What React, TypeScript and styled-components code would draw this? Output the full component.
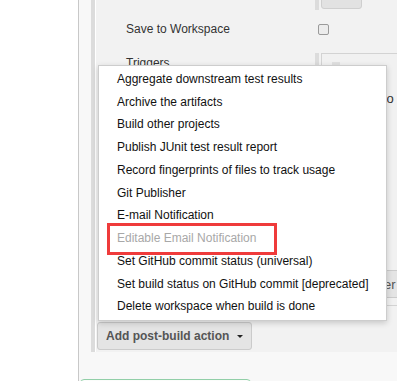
import React from 'react'
import styled, { createGlobalStyle } from 'styled-components'

const GlobalStyle = createGlobalStyle`
html, body {
  margin: 0;
  padding: 0;
  background: #fff;
  font-family: "Liberation Sans", Arial, sans-serif;
  font-size: 12px;
  overflow: hidden;
}
`

const Page = styled.div`
display: flex;
width: 397px;
height: 381px;
overflow: hidden;
`

const SideGap = styled.div`
width: 78px;
flex-shrink: 0;
background: #fff;
`

const Panel = styled.div`
flex: 1;
min-width: 0;
border-left: 1px solid #c8c8c8;
background: #f8f8f8;
`

const SectionWrap = styled.div`
padding-left: 12px;
`

const Section = styled.div`
background: #f2f2f2;
border-left: 4px solid #dcdcdc;
box-shadow: inset 1px 0 0 #fff;
padding: 0 0 2px 1px;
display: flex;
flex-direction: column;
`

const Row = styled.div<{ $pad?: string }>`
display: grid;
grid-template-columns: 219px 1fr;
padding: ${p => p.$pad || '0'};
`

const Label = styled.div`
padding-left: 30px;
color: #333;
line-height: 15px;
white-space: nowrap;
`

const Nested = styled.div`
border-left: 4px solid #dcdcdc;
padding-left: 2px;
min-width: 0;
`

const SmallButton = styled.div`
width: 41px;
height: 24px;
margin-top: -15px;
box-sizing: border-box;
background: #e2e2e2;
border: 1px solid #cfcfcf;
border-radius: 3px;
`

const Check = styled.div`
width: 11px;
height: 11px;
box-sizing: border-box;
margin-left: 3px;
border: 1px solid #9a9a9a;
border-radius: 2px;
background: #ececec;
`

const TriggerBox = styled.div`
border: 1px solid #d3d3d3;
border-right: none;
background: #f1f1f1;
padding: 8px 0 7px 0;
display: flex;
flex-direction: column;
`

const Handle = styled.div`
width: 8px;
height: 20px;
margin-left: 10px;
background: #e0e0e0;
`

const TriggerText = styled.div`
margin-top: 9px;
padding-left: 61px;
font-size: 13px;
line-height: 16px;
color: #333;
white-space: nowrap;
`

const GrayButton = styled.div<{ $bold?: boolean; $left?: number }>`
display: inline-flex;
align-items: center;
align-self: flex-start;
height: 28px;
box-sizing: border-box;
margin-left: ${p => p.$left || 0}px;
padding: 0 8px 0 8px;
background: #e4e4e4;
border: 1px solid #cbcbcb;
border-radius: 3px;
color: #555;
font-size: ${p => (p.$bold ? '12px' : '13px')};
font-weight: ${p => (p.$bold ? 'bold' : 'normal')};
white-space: nowrap;
`

const ActionArea = styled.div`
position: relative;
margin-top: 16px;
margin-left: 1px;
align-self: flex-start;
`

const Caret = styled.span`
display: inline-block;
margin-left: 8px;
width: 0;
height: 0;
border-left: 3px solid transparent;
border-right: 3px solid transparent;
border-top: 3px solid #222;
`

const Menu = styled.div`
position: absolute;
left: 1px;
bottom: calc(100% + 1px);
width: 289px;
box-sizing: border-box;
padding: 2px 0;
background: #fff;
border: 1px solid #cdcdcd;
box-shadow: 0 2px 6px rgba(0, 0, 0, 0.18);
z-index: 2;
`

const MenuItem = styled.div<{ $disabled?: boolean }>`
position: relative;
height: 22.75px;
line-height: 22.75px;
padding-left: 18px;
color: ${p => (p.$disabled ? '#a8a8a8' : '#111')};
white-space: nowrap;
`

const Highlight = styled.span`
position: absolute;
left: 8px;
top: -4.5px;
width: 170px;
height: 32px;
box-sizing: border-box;
border: 3px solid #ef3b3b;
pointer-events: none;
`

const Footer = styled.div`
margin: 27px 0 0 1px;
width: 171px;
height: 20px;
box-sizing: border-box;
border: 1px solid #92cfa8;
border-radius: 4px;
background: #fbfdfb;
`

const items = [
  'Aggregate downstream test results',
  'Archive the artifacts',
  'Build other projects',
  'Publish JUnit test result report',
  'Record fingerprints of files to track usage',
  'Git Publisher',
  'E-mail Notification',
  'Editable Email Notification',
  'Set GitHub commit status (universal)',
  'Set build status on GitHub commit [deprecated]',
  'Delete workspace when build is done',
]

const App = () => {
  return <Page>
    <GlobalStyle />
    <SideGap />
    <Panel>
      <SectionWrap>
        <Section>
          <Row>
            <div />
            <Nested style={{ height: 10 }}>
              <SmallButton />
            </Nested>
          </Row>

          <Row $pad="6px 0 0 0" style={{ alignItems: 'center', height: 27 }}>
            <Label>Save to Workspace</Label>
            <Check />
          </Row>

          <Row $pad="10px 0 0 0">
            <Label style={{ paddingTop: 3 }}>Triggers</Label>
            <Nested>
              <TriggerBox>
                <Handle />
                <TriggerText>to</TriggerText>
                <GrayButton $left={1} style={{ marginTop: 163 }}>Add trigger</GrayButton>
              </TriggerBox>
            </Nested>
          </Row>

          <ActionArea>
            <Menu>
              {items.map(item => (
                <MenuItem key={item} $disabled={item === 'Editable Email Notification'}>
                  {item}
                  {item === 'Editable Email Notification' && <Highlight />}
                </MenuItem>
              ))}
            </Menu>
            <GrayButton $bold>
              Add post-build action
              <Caret />
            </GrayButton>
          </ActionArea>
        </Section>
      </SectionWrap>
      <Footer />
    </Panel>
  </Page>
}

export default App
